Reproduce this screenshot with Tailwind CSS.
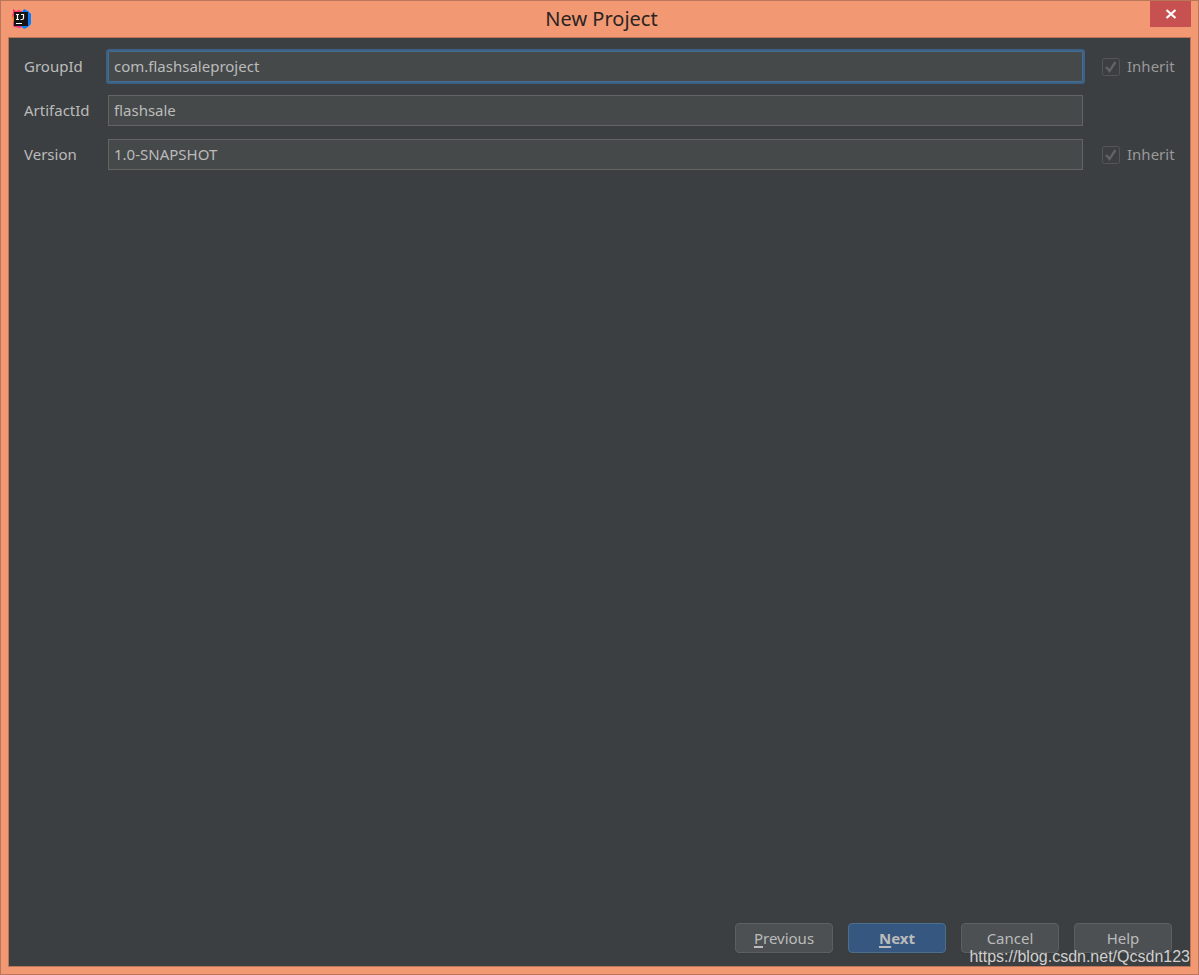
<!DOCTYPE html>
<html lang="en">
  <head>
    <meta charset="UTF-8" />
    <meta name="viewport" content="width=device-width, initial-scale=1.0" />
    <title>New Project</title>
    <script src="https://cdn.jsdelivr.net/npm/@tailwindcss/browser@4"></script>
  </head>
  <body class="font-['Noto_Sans',sans-serif] text-[#bbbbbb]">
    <div class="relative flex flex-col min-h-screen border border-[#b97659] bg-[#f29973] px-[7px] pb-[7px]">
      <!-- Title bar -->
      <header class="flex justify-between h-9 text-[#2b2422]">
        <div class="flex flex-1 items-center pl-1">
          <svg class="size-5" viewBox="0 0 20 20" aria-hidden="true">
            <path fill="#fe2f69" d="M1 0l3 2 3-1 4 2v3H2v4L0 7l1-3z" />
            <path fill="#fc801d" d="M0 8l3-1v7l-2-1z" />
            <path fill="#f0357a" d="M1 12l3 3 5 1 1 2-2 1-6-1-1-1z" />
            <path fill="#087cfa" d="M10 3l2-3 4 2 3 3v10l-3 3-4 2-3-3z" />
            <path fill="#141417" d="M2 3h14v14H2z" />
            <path fill="none" stroke="#fff" stroke-width="1.2" d="M4 5.500h3M5.500 5.500v5M4 10.500h3M9 5.500h2.500v3.500q0 1.500-1.500 1.500H8.500" />
            <path fill="#fff" d="M4 14h6v1H4z" />
          </svg>
        </div>
        <h1 class="text-xl leading-9">New Project</h1>
        <div class="flex flex-1 items-start justify-end">
          <button type="button" aria-label="Close" class="flex items-center justify-center w-[41px] h-[26px] bg-[#c75050]">
            <svg class="w-3 h-2.5" viewBox="0 0 12 10" fill="none" stroke="#fff" stroke-width="2.2" aria-hidden="true">
              <path d="M1.500 1l9 8M10.500 1l-9 8" />
            </svg>
          </button>
        </div>
      </header>

      <form class="flex flex-col grow border border-[#b97659] bg-[#3c3f41] text-[15px]">
        <!-- Maven coordinates -->
        <div class="grid grid-cols-[68px_1fr_76px] items-center gap-x-4 gap-y-[13px] pt-[13px] px-[15px]">
          <label for="groupId">GroupId</label>
          <input id="groupId" type="text" value="com.flashsaleproject" class="w-full min-w-0 h-[31px] px-[5px] pb-0.5 border border-[#466d94] bg-[#45494a] outline-2 outline-[#3d6185] rounded-[1px]" />
          <label class="flex items-center gap-[7px] pl-[3px] text-[#999999]">
            <input type="checkbox" checked disabled class="sr-only" />
            <svg class="size-[18px] shrink-0" viewBox="0 0 18 18" fill="none" aria-hidden="true">
              <rect x=".5" y=".5" width="17" height="17" rx="2" stroke="#545657" />
              <path d="M4 9l3.500 4L13.500 4" stroke="#606263" stroke-width="2.4" />
            </svg>
            Inherit
          </label>

          <label for="artifactId">ArtifactId</label>
          <input id="artifactId" type="text" value="flashsale" class="w-full min-w-0 h-[31px] px-[5px] pb-0.5 border border-[#646464] bg-[#45494a]" />
          <span></span>

          <label for="version">Version</label>
          <input id="version" type="text" value="1.0-SNAPSHOT" class="w-full min-w-0 h-[31px] px-[5px] pb-0.5 border border-[#646464] bg-[#45494a]" />
          <label class="flex items-center gap-[7px] pl-[3px] text-[#999999]">
            <input type="checkbox" checked disabled class="sr-only" />
            <svg class="size-[18px] shrink-0" viewBox="0 0 18 18" fill="none" aria-hidden="true">
              <rect x=".5" y=".5" width="17" height="17" rx="2" stroke="#545657" />
              <path d="M4 9l3.500 4L13.500 4" stroke="#606263" stroke-width="2.4" />
            </svg>
            Inherit
          </label>
        </div>

        <!-- Wizard buttons -->
        <div class="flex justify-end gap-[15px] mt-auto pr-[18px] pb-[13px]">
          <button type="button" class="w-[98px] h-[30px] border border-[#5e6060] rounded-sm bg-[#4c5052] shadow-xs"><span class="underline decoration-2 underline-offset-2">P</span>revious</button>
          <button type="button" class="w-[98px] h-[30px] border border-[#4c708c] rounded-sm bg-[#365880] shadow-xs font-bold"><span class="underline decoration-2 underline-offset-2">N</span>ext</button>
          <button type="button" class="w-[98px] h-[30px] border border-[#5e6060] rounded-sm bg-[#4c5052] shadow-xs">Cancel</button>
          <button type="button" class="w-[98px] h-[30px] border border-[#5e6060] rounded-sm bg-[#4c5052] shadow-xs">Help</button>
        </div>
      </form>

      <p class="absolute right-2 bottom-[7px] font-['Liberation_Sans',sans-serif] text-base leading-5 text-[#d0d0d0] pointer-events-none">https://blog.csdn.net/Qcsdn123</p>
    </div>
  </body>
</html>
